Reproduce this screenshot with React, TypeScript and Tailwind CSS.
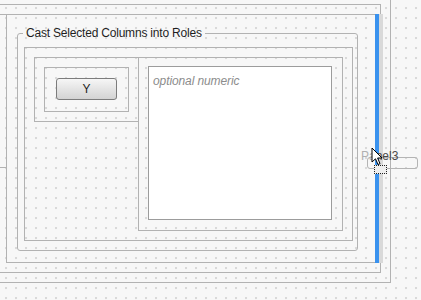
import React from "react";

const line = "border border-[#b2b2b2]";

export default function App() {
  return (
    <div
      className="relative w-[421px] h-[300px] overflow-hidden bg-[#f7f7f7] bg-[radial-gradient(circle_at_1px_1px,#d9d9d9_1px,transparent_1.6px)] bg-[size:10px_10px] bg-[position:5px_7px]"
      style={{ fontFamily: '"Liberation Sans", Arial, sans-serif' }}
    >
      {/* outermost box A */}
      <div className={`-ml-[10px] -mt-[10px] w-[401px] h-[293px] ${line} pt-[13px]`}>
        {/* box B */}
        <div className={`w-[390px] h-[269px] ${line} pt-[9px]`}>
          <div className="flex items-start">
            {/* left neighbour panel */}
            <div className={`w-[15px] h-[154px] ${line}`} />
            {/* main panel M */}
            <div className={`-ml-px w-[371px] h-[249px] ${line} pl-[10px] pt-[11px]`}>
              <fieldset className="w-[341px] h-[225px] border border-[#b2b2b2] rounded-[3px] min-w-0">
                <legend className="ml-[5px] px-[3px] text-[12px] leading-[15px] tracking-[-0.2px] text-[#1e1e1e]">
                  Cast Selected Columns into Roles
                </legend>
                <div className={`ml-[6px] mt-[6px] w-[329px] h-[194px] ${line} pl-[9px] pt-[9px]`}>
                  <div className="flex items-start">
                    <div className={`w-[105px] h-[65px] ${line} p-[9px]`}>
                      <div className={`w-[85px] h-[45px] ${line} flex justify-center pt-[10px]`}>
                        <button className="w-[61px] h-[22px] rounded-[3px] border border-[#7c7c7c] bg-[linear-gradient(#f6f6f6,#e4e4e4_50%,#d3d3d3)] text-[12px] leading-[20px] text-[#1e1e1e] text-center">
                          Y
                        </button>
                      </div>
                    </div>
                    <div className={`-ml-px w-[205px] h-[174px] ${line} pl-[9px] pt-[8px]`}>
                      <div className="w-[184px] h-[154px] border border-[#9c9c9c] bg-white pl-[4px] pt-[1px]">
                        <span className="italic text-[12px] leading-[15px] tracking-[-0.1px] text-[#8c8c8c]">
                          optional numeric
                        </span>
                      </div>
                    </div>
                  </div>
                </div>
              </fieldset>
            </div>
          </div>
        </div>
      </div>

      {/* splitter highlight overlay */}
      <div className="absolute left-[375px] top-[14px] flex h-[249px]">
        <div className="w-[4px] h-full bg-[#3a92ee]" />
        <div className="w-[4px] h-full bg-[#d9d9d9]" />
      </div>

      {/* drag label overlay */}
      <div className="absolute left-[367px] top-[157px] w-[51px] h-[12px] rounded-[3px] border border-[#b4b4b4]" />
      <div className="absolute left-[361px] top-[149px] text-[12px] leading-[14px] text-[#4a4a4a]">
        <span className="text-[#b0b0b0]">Pa</span>nel3
      </div>

      {/* dotted drag rectangle */}
      <div className="absolute left-[374px] top-[165px] w-[13px] h-[9px] border border-dotted border-[#222] bg-[#eee]" />

      {/* cursor */}
      <svg className="absolute left-[371px] top-[147px]" width="13" height="20" viewBox="0 0 13 20">
        <path
          d="M1 1 L1 15 L4.5 11.8 L7 17.5 L9 16.6 L6.6 11 L11 11 Z"
          fill="#fff"
          stroke="#000"
          strokeWidth="1"
          strokeLinejoin="miter"
        />
      </svg>
    </div>
  );
}
